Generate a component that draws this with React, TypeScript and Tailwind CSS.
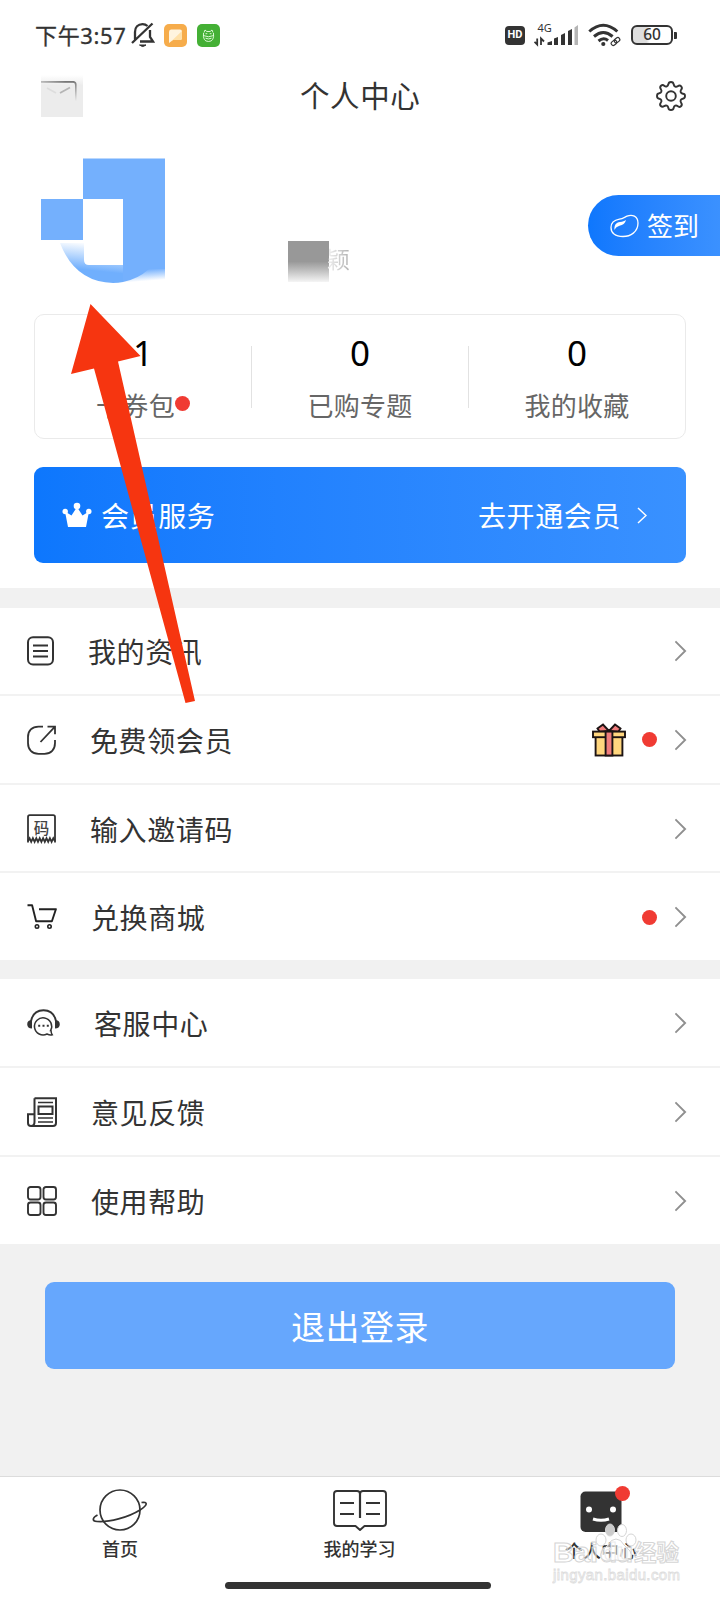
import type { ReactNode } from "react";
import clsx from "clsx";

type MenuItem = {
  label: string;
  icon: ReactNode;
  gift?: boolean;
  dot?: boolean;
};

const STATS = [
  { value: "1", label: "卡券包", dot: true },
  { value: "0", label: "已购专题" },
  { value: "0", label: "我的收藏" },
];

function NewsIcon() {
  return (
    <svg width="27" height="30" viewBox="0 0 27 30" fill="none" stroke="#333" strokeWidth="2">
      <rect x="1" y="1.2" width="25" height="27.4" rx="5" />
      <path d="M6 9.4h15M6 14.9h15M6 20.4h15" />
    </svg>
  );
}

function ShareIcon() {
  return (
    <svg width="29" height="30" viewBox="0 0 29 30" fill="none" stroke="#333" strokeWidth="1.8">
      <path d="M16 1.6h-4.5C5 1.6 1 5.6 1 12v6c0 6.5 4 10.8 10.5 10.8h6c6.5 0 10.5-4.3 10.5-10.8V15" />
      <path d="M20.500 1.6H28v7.6M28 1.6 13.5 17" />
    </svg>
  );
}

function CodeIcon() {
  return (
    <svg width="29" height="30" viewBox="0 0 29 30" fill="none" stroke="#333" strokeWidth="1.8">
      <path d="M1 28.500V3q0-1.800 1.800-1.800h23.400Q28 1.200 28 3v25.500" />
      <path d="m1 27 1.600-2.800 1.600 3.600 1.700-3.600 1.700 3.600 1.700-3.600 1.700 3.600 1.700-3.600 1.700 3.600 1.700-3.600 1.700 3.600 1.700-3.600 1.700 3.600 1.700-3.600 1.700 3.600 1.700-3.600L28 27" strokeWidth="1.800" />
      <text x="14.600" y="20" textAnchor="middle" fontSize="15.500" fontWeight="500" fill="#444" stroke="none">码</text>
    </svg>
  );
}

function CartIcon() {
  return (
    <svg width="30" height="30" viewBox="0 0 30 30" fill="none" stroke="#222" strokeWidth="1.900">
      <path d="M.5 3.200h4.600l4 16h15.800l4-12H12" strokeLinejoin="round" />
      <circle cx="10" cy="24.500" r="1.700" strokeWidth="1.600" />
      <circle cx="22.500" cy="24.500" r="1.700" strokeWidth="1.600" />
    </svg>
  );
}

function ServiceIcon() {
  return (
    <svg width="33" height="30" viewBox="0 0 33 30" fill="none" stroke="#333" strokeWidth="1.500">
      <path d="M4 13C5.500 6 10 2.200 16.500 2.200S27.500 6 29 13" strokeWidth="1.900" />
      <path d="M5 12v8.500c-3 0-4.800-1.500-4.800-4.300S2.200 12 5 12ZM28 12v8.500c3 0 4.800-1.500 4.800-4.300S30.800 12 28 12Z" fill="#333" stroke="none" />
      <path d="M23.600 22.500a8.600 8.600 0 1 0-3.600 3.500q3 1.500 5.200.8-1-1.300-1.200-4.300Z" />
      <path d="M11.200 17.700h2M15.500 17.700h2M19.800 17.700h2" strokeWidth="2" />
    </svg>
  );
}

function FeedbackIcon() {
  return (
    <svg width="30" height="30" viewBox="0 0 30 30" fill="none" stroke="#333" strokeWidth="2">
      <path d="M7.500 1.200H29V26q0 3-3 3H4q-3 0-3-3V17.200h6.500M7.500 1.200V25q0 4-3.500 4" />
      <path d="M11 5.500h15M11 21h15M11 25h15" strokeWidth="1.600" />
      <rect x="11.500" y="9.500" width="14" height="7.500" />
    </svg>
  );
}

function HelpIcon() {
  return (
    <svg width="30" height="30" viewBox="0 0 30 30" fill="none" stroke="#333" strokeWidth="1.900">
      <rect x="1" y="1" width="12.500" height="12.500" rx="2.500" />
      <rect x="16.500" y="1" width="12.500" height="12.500" rx="2.500" />
      <rect x="1" y="16.500" width="12.500" height="12.500" rx="2.500" />
      <rect x="16.500" y="16.500" width="12.500" height="12.500" rx="2.500" />
    </svg>
  );
}

function GiftIcon() {
  return (
    <svg width="34" height="34" viewBox="0 0 34 34" stroke="#1c1313" strokeWidth="1.900">
      <path d="M17 8 11 1.500 5.500 5.500 7.500 8.600ZM17 8l6-6.500 5.500 4-2 3.100Z" fill="#f07c7c" />
      <rect x="3.600" y="14" width="26.800" height="18.500" fill="#ffd67e" />
      <rect x="1" y="8.600" width="32" height="5.600" fill="#ffd67e" />
      <rect x="13.600" y="8.600" width="6.800" height="23.900" fill="#f07c7c" />
    </svg>
  );
}

function Chevron() {
  return (
    <svg width="12" height="22" viewBox="0 0 12 22" fill="none" stroke="#8f8f8f" strokeWidth="1.900">
      <path d="m.4 1.400 9.700 9.600-9.700 9.600" />
    </svg>
  );
}

const MAIN_MENU: MenuItem[] = [
  { label: "我的资讯", icon: <NewsIcon /> },
  { label: "免费领会员", icon: <ShareIcon />, gift: true, dot: true },
  { label: "输入邀请码", icon: <CodeIcon /> },
  { label: "兑换商城", icon: <CartIcon />, dot: true },
];

const SUPPORT_MENU: MenuItem[] = [
  { label: "客服中心", icon: <ServiceIcon /> },
  { label: "意见反馈", icon: <FeedbackIcon /> },
  { label: "使用帮助", icon: <HelpIcon /> },
];

function Menu({ items }: { items: MenuItem[] }) {
  return (
    <div className="bg-white">
      {items.map((item, i) => (
        <div
          key={item.label}
          className={clsx(
            "flex items-center pl-[27px] pr-[33px] pt-[1px]",
            i < items.length - 1 ? "h-[88.67px] border-b-2 border-[#f2f2f2]" : "h-[87px]"
          )}
        >
          {item.icon}
          <span className="ml-[34px] text-[28px] leading-none tracking-[0.6px] text-[#333]">{item.label}</span>
          <div className="ml-auto flex items-center">
            {item.gift && <GiftIcon />}
            {item.dot && <span className="ml-[16px] mr-[18px] size-[15px] rounded-full bg-[#f03b33]" />}
            <Chevron />
          </div>
        </div>
      ))}
    </div>
  );
}

function StatusBar() {
  return (
    <div className="flex h-[70px] items-center pl-[35px] pr-[43px] text-[#333]">
      <span className="font-['Noto_Sans','Noto_Sans_CJK_SC',sans-serif] text-[22px] leading-none tracking-[0.65px] [-webkit-text-stroke:0.3px_#333]">下午3:57</span>
      <svg className="ml-[4px]" width="24" height="26" viewBox="0 0 24 26" fill="none" stroke="#333" strokeWidth="2.300">
        <path d="M4 17.500V10C4 5.500 7 2.200 11.500 2.200q3 0 5 1.800M19 8v7l3 4.500H9M1 21 21.500 1.500" />
        <path d="M8.500 23q3.200 3 6.500 0Z" fill="#333" strokeWidth="1" />
      </svg>
      <svg className="ml-[9px]" width="23" height="23" viewBox="0 0 23 23">
        <rect width="23" height="23" rx="5" fill="#f6ac4b" />
        <path d="M7 5.500h9q2 0 2 2v6.500q0 2-2 2H9l-4 3v-11q0-2.500 2-2.500Z" fill="#fff4df" />
        <path d="M18 7v7q0 2-2 2H9l-2 1.400Z" fill="#ffe0a8" />
      </svg>
      <svg className="ml-[10px]" width="23" height="23" viewBox="0 0 23 23" fill="none" stroke="#e8ffe2" strokeWidth=".9">
        <rect width="23" height="23" rx="5" fill="#44b035" stroke="none" />
        <path d="M7 8.500 8 6l1.800 1.500h3.400L15 6l1 2.500M6.500 9q-1 8.500 5 8.500t5-8.500M6 11.500q5.500 2.500 11 0M8.500 9.700h1.800M12.700 9.700h1.800M8.500 14.200q3 1.500 6 0" />
      </svg>

      <div className="ml-auto flex items-center">
        <span className="flex h-[19px] w-[20px] items-center justify-center rounded-[4px] bg-[#333] font-['Roboto',sans-serif] text-[11px] font-bold text-white">HD</span>
        <svg className="ml-[9px]" width="45" height="24" viewBox="0 0 45 24" fill="#333">
          <text x="3.500" y="8.500" fontSize="11" fontFamily="Noto Sans, sans-serif">4G</text>
          <path d="M3.200 15.500v6L.5 18.800M7 22v-6.500l3 3M3.200 21.500" fill="none" stroke="#333" strokeWidth="1.800" />
          <path d="M13.500 19.500 18 18v4h-4.500ZM20 15.500l4-1.500v8h-4ZM27 12l4-2v12h-4ZM34 8l4-2v16h-4Z" />
          <path d="M40.500 4.500 44 2v20h-3.500Z" fill="#b5b5b5" />
        </svg>
        <svg className="ml-[9px]" width="34" height="24" viewBox="0 0 34 24" fill="none" stroke="#333" strokeWidth="3">
          <path d="M1.300 8.500q14-12.500 28 0M6 13.500q9.300-8 18.600 0M10.500 18q5-4.200 9.500-.5" />
          <circle cx="15.300" cy="21" r="1.300" fill="#333" strokeWidth="1.600" />
          <g transform="rotate(-40 27.500 18.500)" strokeWidth="1.200">
            <rect x="22.500" y="16.500" width="6" height="4" rx="2" />
            <rect x="26.500" y="16.500" width="6" height="4" rx="2" />
          </g>
        </svg>
        <div className="ml-[9px] flex h-[20px] w-[42px] items-center justify-center rounded-[6px] border-2 border-[#333] bg-linear-to-r from-[#dedede] from-35% to-white to-45% font-['Noto_Sans',sans-serif] text-[15.5px] font-medium leading-none">60</div>
        <span className="ml-[1px] h-[7px] w-[3px] rounded-r-[1px] bg-[#333]" />
      </div>
    </div>
  );
}

function Header() {
  return (
    <div className="flex h-[52px] items-center pl-[41px] pr-[34px]">
      {/* mail button, mostly hidden by the mosaic */}
      <svg width="42" height="42" viewBox="0 0 42 42" fill="none">
        <defs>
          <linearGradient id="mailBg" x1="0" y1="0" x2="0" y2="1">
            <stop offset="0" stopColor="#fff" />
            <stop offset=".25" stopColor="#ececec" />
          </linearGradient>
          <linearGradient id="mailTop">
            <stop offset="0" stopColor="#bbb" />
            <stop offset=".75" stopColor="#777" />
            <stop offset="1" stopColor="#777" />
          </linearGradient>
          <linearGradient id="mailSide" x1="0" y1="0" x2="0" y2="1">
            <stop offset="0" stopColor="#777" />
            <stop offset="1" stopColor="#eaeaea" />
          </linearGradient>
        </defs>
        <rect width="42" height="42" fill="url(#mailBg)" />
        <rect y="6" width="33" height="1.800" fill="url(#mailTop)" />
        <path d="M32 6q3.600 0 3.600 3.500V26H34V10q0-2.500-2-2.500Z" fill="url(#mailSide)" />
        <path d="m6 13 9 5" stroke="#ddd" strokeWidth="1.500" />
        <path d="m19 18 10-5.500" stroke="#b5b5b5" strokeWidth="1.800" />
      </svg>
      <h1 className="mb-[3px] ml-[217px] text-[29.500px] leading-none tracking-[0.6px] text-[#333]">个人中心</h1>
      <svg className="ml-auto" width="30" height="30" viewBox="0 0 30 30" fill="none" stroke="#333" strokeWidth="1.900" strokeLinejoin="round">
        <path d="M12.300 3.500Q12.600 1 15 1t2.700 2.500q.300 1.600 1.500 2.100 1.300.500 2.500-.400 2-1.500 3.500.100t-.1 3.500q-.900 1.200-.4 2.400.500 1.300 2.100 1.500Q29 12.600 29 15t-2.200 2.700q-1.600.300-2.100 1.500-.500 1.300.4 2.500 1.500 2-.1 3.500t-3.500-.1q-1.100-.9-2.300-.4t-1.500 2.100Q17.400 29 15 29t-2.700-2.200q-.3-1.600-1.500-2.100t-2.500.4q-2 1.500-3.500-.1t.1-3.500q.9-1.100.4-2.300t-2.100-1.500Q1 17.400 1 15t2.200-2.700q1.600-.3 2.100-1.500t-.4-2.500q-1.500-2 .1-3.500t3.500.1q1.100.9 2.300.4t1.500-1.800Z" />
        <circle cx="15" cy="15" r="4.800" />
      </svg>
    </div>
  );
}

function Profile() {
  return (
    <div className="flex h-[192px] items-start">
      <svg className="ml-[41px] mt-[36px]" width="125" height="126" viewBox="0 0 125 126">
        <defs>
          <linearGradient id="arcFade" x1=".35" y1="0" x2=".2" y2=".65">
            <stop offset="0" stopColor="#fff" />
            <stop offset="1" stopColor="#70affd" />
          </linearGradient>
          <linearGradient id="cornerFade" x1="0" y1="0" x2=".25" y2="1">
            <stop offset=".15" stopColor="#74b0fd" />
            <stop offset="1" stopColor="#fff" />
          </linearGradient>
        </defs>
        <path d="M19 85h24v17q0 5 5 5h35v1h25q-15 17-36 17Q34 124 19 85Z" fill="url(#arcFade)" />
        <path d="M42 .5h82V112H82V41H42Z" fill="#74b0fd" />
        <rect y="41" width="42" height="41" fill="#74b0fd" />
        <path d="M82 111h42v13H82Z" fill="url(#cornerFade)" />
        <path d="M82 111h26q-11 10-26 13Z" fill="#74b0fd" />
      </svg>
      <div className="ml-[122px] mt-[119px] flex h-[41px]">
        <div className="w-[41px] bg-linear-to-b from-[#989898] from-50% to-[#f5f5f5]" />
        <span className="-ml-[2px] mt-[6px] bg-linear-to-r from-[#f4f4f4] to-[#b0b0b0] bg-clip-text text-[23px] leading-none text-transparent">颖</span>
      </div>
      <button className="ml-auto mt-[73px] flex h-[61px] w-[132px] items-center rounded-l-full bg-linear-to-r from-[#0e77fd] to-[#3b91ff] pl-[22px] text-white">
        <svg width="29" height="24" viewBox="0 0 29 24" fill="none" stroke="#fff" strokeWidth="1.300">
          <path d="M17 2.200C22 0 28 2 28 9c0 9-7.500 13.500-15 13.500C5 22.500 1 19 1 13.500 1 8.500 5 6 9.500 5.200 13 4.500 14 3.500 17 2.200Z" />
          <path d="M4.500 16c-.500-5 1.500-7.500 5.500-8 3-.300 4-1 6-2-1 4-4 5-7 6-2.500.900-3.500 2-4.500 4Z" fill="#fff" stroke="none" />
        </svg>
        <span className="mb-[1px] ml-[8px] text-[26px] leading-none">签到</span>
      </button>
    </div>
  );
}

function Stats() {
  return (
    <div className="mx-[34px] flex h-[125px] items-center rounded-[10px] border border-[#eaeaea]">
      {STATS.map((s, i) => (
        <div key={s.label} className={clsx("flex h-[62px] flex-1 flex-col items-center justify-center", i > 0 && "border-l border-[#e2e2e2]")}>
          <span className="font-['Noto_Sans',sans-serif] text-[35px] leading-[36px] text-black">{s.value}</span>
          <span className="mt-[20px] flex items-center text-[26px] leading-[28px] tracking-[0.3px] text-[#666]">
            {s.label}
            {s.dot && <i className="mb-[2px] size-[15px] rounded-full bg-[#f03b33]" />}
          </span>
        </div>
      ))}
    </div>
  );
}

function MemberBar() {
  return (
    <div className="mx-[34px] mt-[28px] flex h-[96px] items-center rounded-[9px] bg-linear-to-r from-[#0d77fd] to-[#3991ff] pl-[28px] pr-[39px] text-[28px] leading-none tracking-[0.6px] text-white">
      <svg width="30" height="26" viewBox="0 0 30 26" fill="#fff">
        <circle cx="15" cy="4" r="3.300" />
        <circle cx="3.200" cy="9.500" r="2.700" />
        <circle cx="26.800" cy="9.500" r="2.700" />
        <path d="m3 9.500 6.500 4L15 5l5.500 8.500 6.500-4-3 15.500H6Z" />
      </svg>
      <span className="ml-[9px]">会员服务</span>
      <span className="ml-auto">去开通会员</span>
      <svg className="ml-[16px]" width="10" height="17" viewBox="0 0 10 17" fill="none" stroke="#fff" strokeWidth="1.500">
        <path d="m1 1 8 7.500L1 16" />
      </svg>
    </div>
  );
}

function TabBar() {
  return (
    <nav className="relative flex h-[124px] flex-col border-t border-[#dcdcdc] bg-white text-[18px] font-medium leading-none text-[#333]">
      <div className="flex pt-[11px]">
        <div className="flex w-[240px] flex-col items-center">
          <svg width="56" height="44" viewBox="0 0 56 44" fill="none" stroke="#333" strokeWidth="1.700">
            <circle cx="28" cy="22" r="20" />
            <path d="M5.500 27C0 30 0 33 5 33.500c12 1 31-4 43-11.500 8-5 8-8.500 1.500-7.500" />
          </svg>
          <span className="mt-[7px]">首页</span>
        </div>
        <div className="flex w-[239px] flex-col items-center">
          <svg width="54" height="44" viewBox="0 0 54 44" fill="none" stroke="#333" strokeWidth="1.900" strokeLinejoin="round">
            <path d="M4 3h20q3 0 3 3 0-3 3-3h20q3 0 3 3v29q0 3-3 3H31.500L27 42l-4.500-4H4q-3 0-3-3V6q0-3 3-3Z" />
            <path d="M27 5v25" strokeWidth="2.200" />
            <path d="M7 15h14M7 26h14M33 15h14M33 26h14" />
          </svg>
          <span className="mt-[7px]">我的学习</span>
        </div>
        <div className="flex flex-1 flex-col items-center pl-[3px]">
          <div className="relative">
            <svg width="42" height="44" viewBox="0 0 42 44" fill="#fff">
              <rect x=".5" y="3.500" width="41" height="40.500" rx="5" fill="#333" />
              <circle cx="9" cy="21.500" r="3" />
              <circle cx="33" cy="21.500" r="3" />
              <path d="M13 31q8 2.500 16 0" fill="none" stroke="#fff" strokeWidth="3" />
            </svg>
            <i className="absolute -right-[8px] -top-[2px] size-[15px] rounded-full bg-[#f03b33]" />
          </div>
          <span className="mt-[9px]">个人中心</span>
        </div>
      </div>
      <div className="mb-[11px] ml-[225px] mt-auto h-[7px] w-[266px] rounded-full bg-[#333]" />
      <Watermark />
    </nav>
  );
}

function Watermark() {
  return (
    <div className="absolute left-[552px] top-[44px] h-[66px] w-[132px]">
      <svg width="132" height="66" viewBox="0 0 132 66" fill="#fff" stroke="#d5d5d5" strokeWidth="1">
        <g fontFamily="Liberation Sans, Noto Sans CJK SC, sans-serif" fontWeight="700" fillOpacity=".45">
          <text x="1" y="41" fontSize="28" textLength="45" lengthAdjust="spacingAndGlyphs">Bai</text>
          <text x="48" y="41" fontSize="28" textLength="33">du</text>
          <text x="82" y="40" fontSize="22.500" fontFamily="Noto Sans CJK SC, sans-serif">经验</text>
          <text x="1" y="59" fontSize="15" fontWeight="400" textLength="127" strokeWidth=".8" stroke="#ddd">jingyan.baidu.com</text>
        </g>
        <ellipse cx="49" cy="19" rx="5" ry="6" />
        <ellipse cx="58" cy="9" rx="4.500" ry="6" fill="#ccc" />
        <ellipse cx="70" cy="9.500" rx="4.500" ry="6" />
        <ellipse cx="79" cy="19" rx="5" ry="6" />
        <path d="M64 18q5 0 8 6l6 6q4 8-4 10-5 0-10-1-5 1-10 1-8-2-4-10l6-6q3-6 8-6Z" fillOpacity=".5" />
      </svg>
    </div>
  );
}

export default function App() {
  return (
    <div className="relative flex h-[1600px] w-[720px] flex-col overflow-hidden bg-[#f1f1f1] font-['Noto_Sans_CJK_SC',sans-serif]">
      <div className="h-[588px] bg-white">
        <StatusBar />
        <Header />
        <Profile />
        <Stats />
        <MemberBar />
      </div>
      <div className="mt-[19.500px]">
        <Menu items={MAIN_MENU} />
      </div>
      <div className="mt-[19px]">
        <Menu items={SUPPORT_MENU} />
      </div>
      <button className="mx-[45px] mt-[38.500px] h-[87px] rounded-[9px] bg-[#66a7fd] text-[34px] leading-none tracking-[0.5px] text-white">退出登录</button>
      <div className="mt-auto">
        <TabBar />
      </div>

      {/* pointer to the avatar */}
      <svg className="pointer-events-none absolute left-[70px] top-[303px]" width="127" height="402" viewBox="70 303 127 402" fill="#f63510">
        <path d="m90.500 304 50 52-22.500 5.500L195 701l-9.500 2L94 368.500 71 374Z" />
      </svg>
    </div>
  );
}
